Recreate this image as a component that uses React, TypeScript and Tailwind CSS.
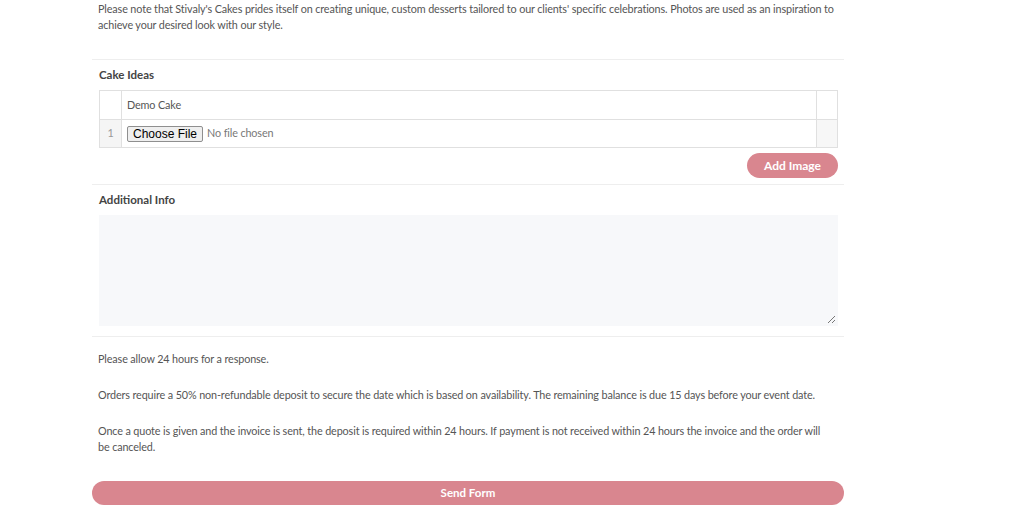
import React from "react";

export default function App() {
  const font = { fontFamily: 'Lato, "Open Sans", sans-serif' };
  return (
    <div className="w-[1024px] h-[532px] bg-white overflow-hidden" style={font}>
      <div className="ml-[92px] w-[752px] text-[10.8px] tracking-[-0.12px] text-[#555]">
        <div className="px-[6px] pt-[1px] pb-[26px] leading-[16px]">
          <p>
            Please note that Stivaly's Cakes prides itself on creating unique, custom desserts tailored to our clients' specific celebrations. Photos are used as an inspiration to achieve your desired look with our style.
          </p>
        </div>
        <div className="border-t border-[#eeeeee]" />
        <div className="px-[7px] pt-[7px] pb-[6px]">
          <div className="font-bold text-[#444] text-[11.5px] tracking-normal leading-[16px] mb-[7px]">Cake Ideas</div>
          <div className="border border-[#e0e0e0] w-[739px]">
            <div className="flex h-[29px] border-b border-[#e0e0e0]">
              <div className="w-[22px] border-r border-[#e0e0e0]" />
              <div className="flex-1 flex items-center px-[5px]">Demo Cake</div>
              <div className="w-[21px] border-l border-[#e0e0e0]" />
            </div>
            <div className="flex h-[27px]">
              <div className="w-[22px] border-r border-[#e0e0e0] bg-[#f5f5f5] flex items-center justify-center text-[#999]">1</div>
              <div className="flex-1 flex items-center px-[5px]">
                <span className="inline-flex items-center h-[16px] px-[5px] border border-[#8f8f8f] rounded-[2px] bg-[#efefef] text-[12px] tracking-normal text-black" style={{ fontFamily: '"Liberation Sans", Arial, sans-serif' }}>Choose File</span>
                <span className="ml-[4px] text-[#777]">No file chosen</span>
              </div>
              <div className="w-[21px] border-l border-[#e0e0e0] bg-[#f7f7f7]" />
            </div>
          </div>
          <div className="flex justify-end w-[739px] mt-[5px]">
            <div className="w-[91px] h-[25px] rounded-full bg-[#d9868f] text-white font-bold text-[12px] tracking-normal flex items-center justify-center">Add Image</div>
          </div>
        </div>
        <div className="border-t border-[#eeeeee]" />
        <div className="px-[7px] pt-[7px] pb-[10px]">
          <div className="font-bold text-[#444] text-[11.5px] tracking-normal leading-[16px] mb-[7px]">Additional Info</div>
          <div className="relative w-[739px] h-[111px] bg-[#f7f8fa]">
            <svg className="absolute right-[2px] bottom-[2px]" width="9" height="9" viewBox="0 0 9 9">
              <path d="M8 1 L1 8 M8 5 L5 8" stroke="#777" strokeWidth="1" />
            </svg>
          </div>
        </div>
        <div className="border-t border-[#eeeeee]" />
        <div className="px-[6px] pt-[14px] leading-[16px]">
          <p>Please allow 24 hours for a response.</p>
          <p className="mt-[20px]">Orders require a 50% non-refundable deposit to secure the date which is based on availability. The remaining balance is due 15 days before your event date.</p>
          <p className="mt-[20px] pr-[10px]">Once a quote is given and the invoice is sent, the deposit is required within 24 hours. If payment is not received within 24 hours the invoice and the order will be canceled.</p>
        </div>
        <div className="mt-[26px] h-[24px] rounded-full bg-[#d9868f] text-white font-bold text-[11.5px] tracking-normal flex items-center justify-center">Send Form</div>
      </div>
    </div>
  );
}
